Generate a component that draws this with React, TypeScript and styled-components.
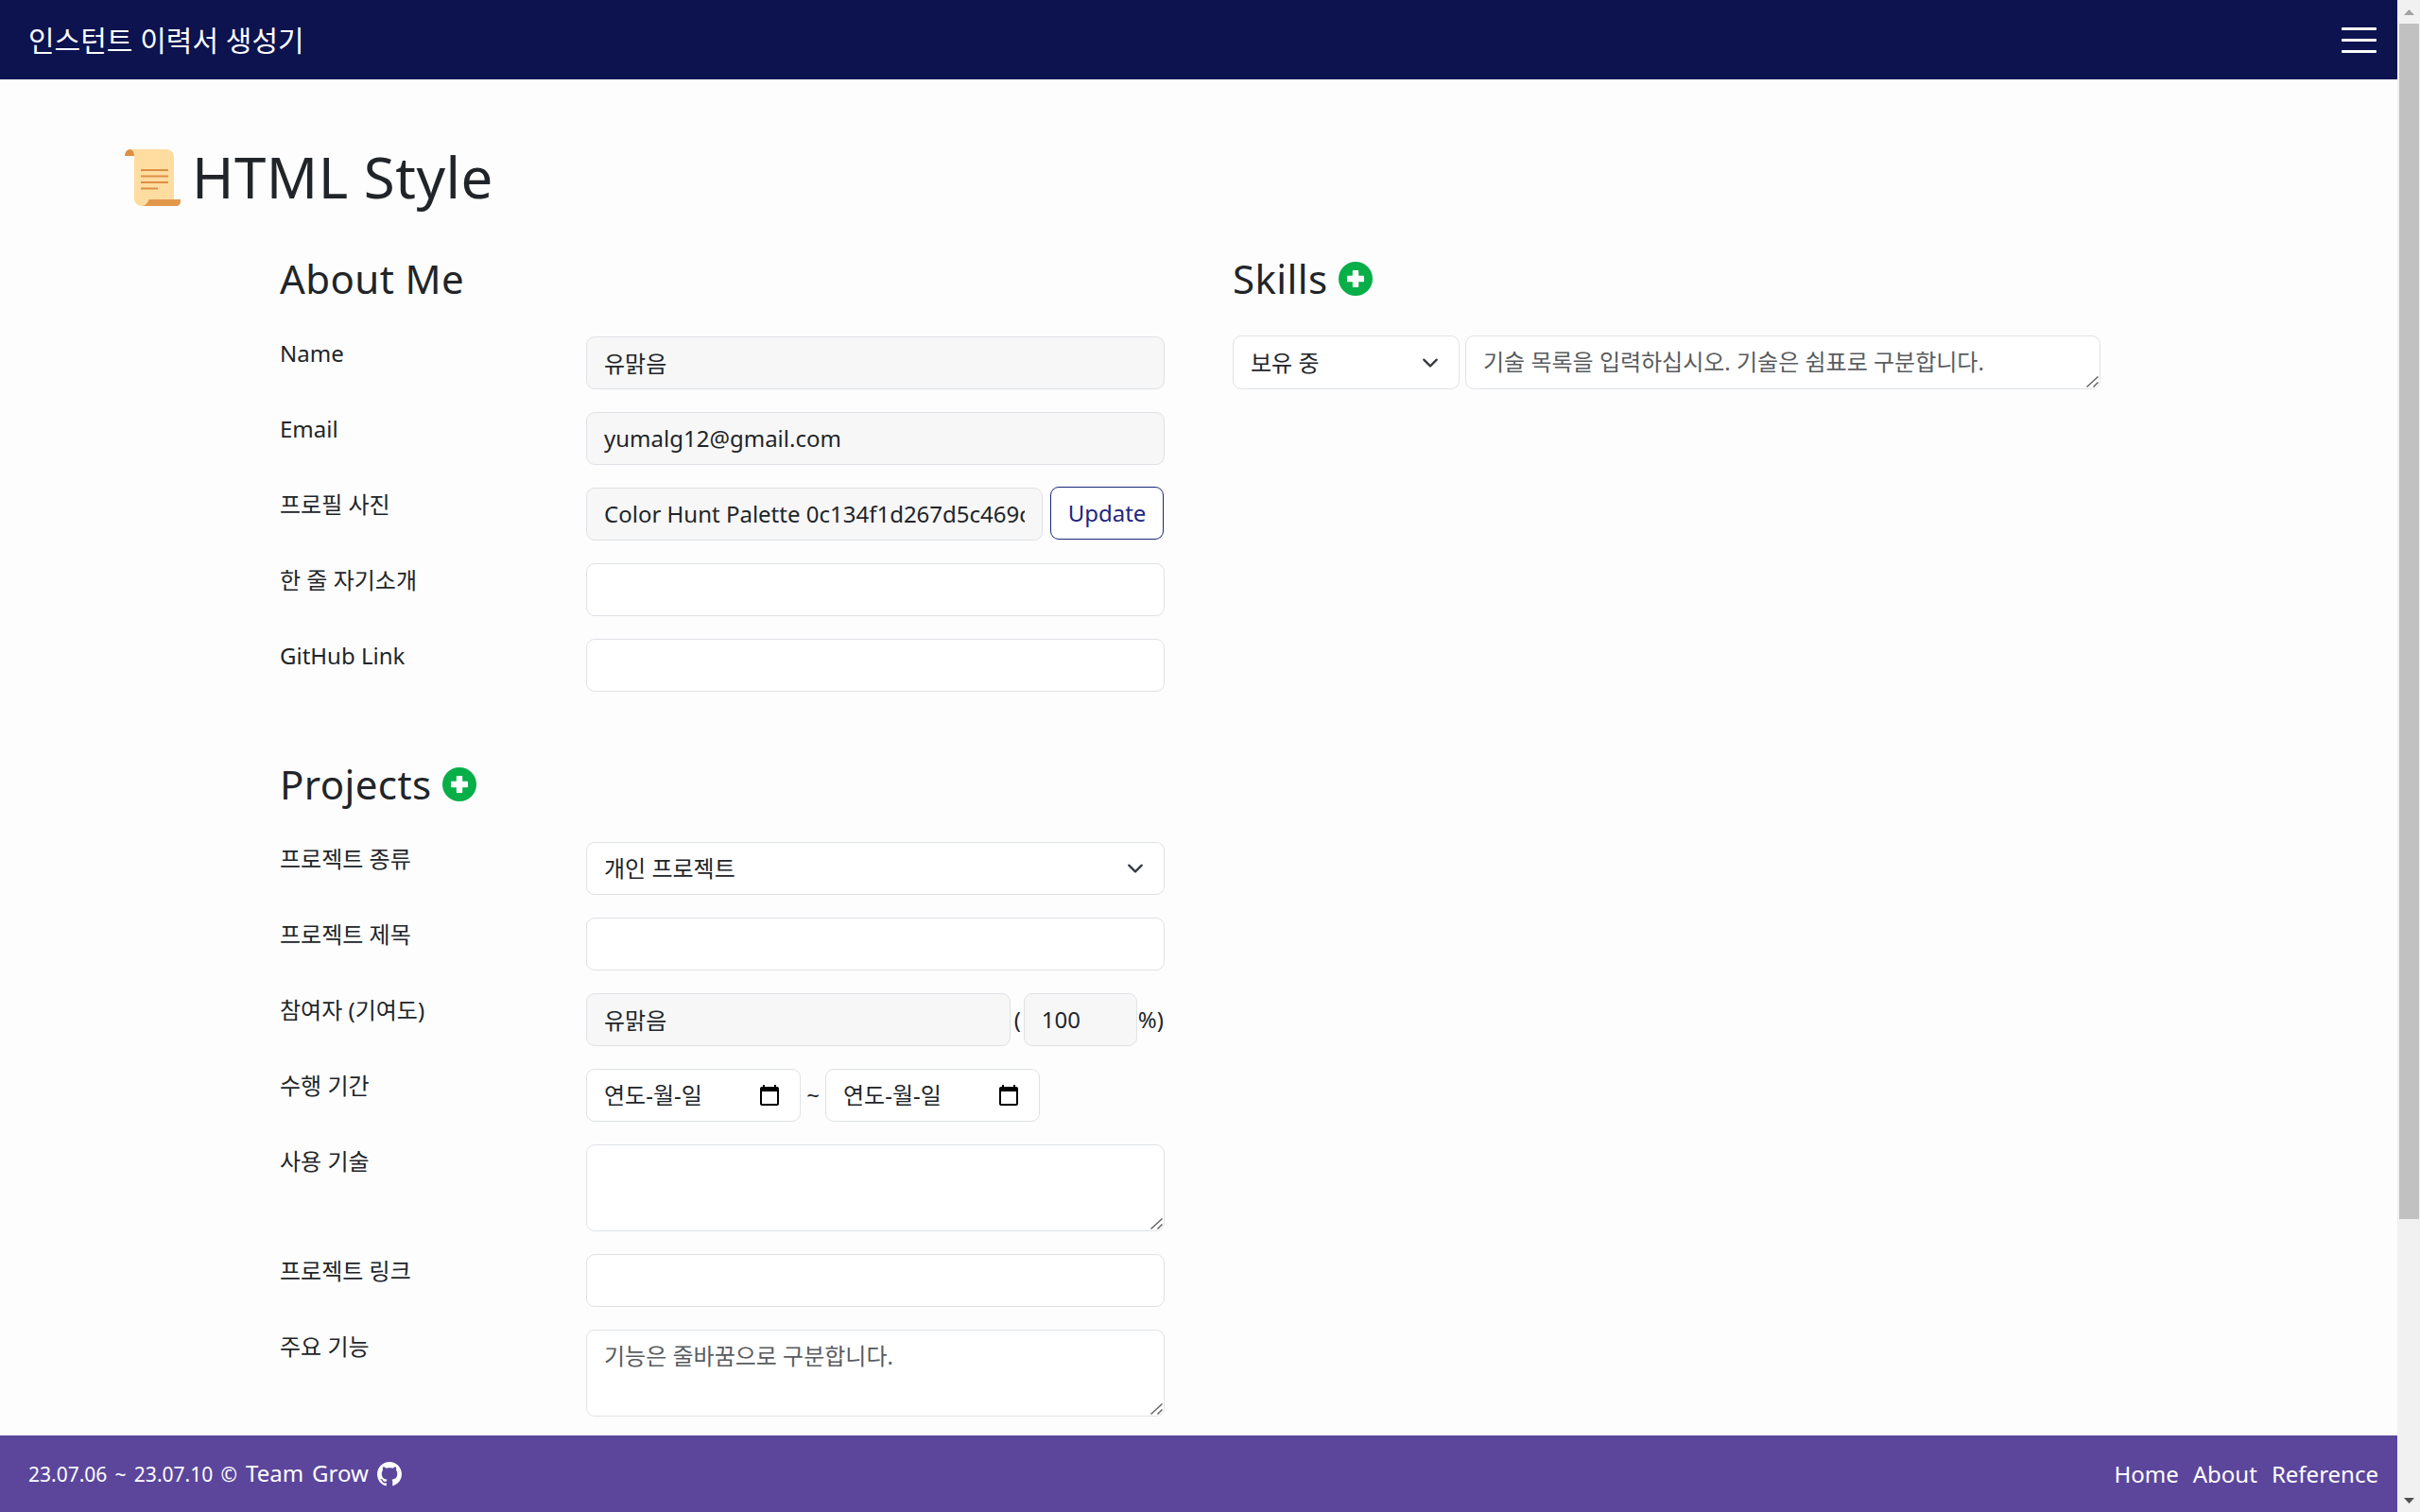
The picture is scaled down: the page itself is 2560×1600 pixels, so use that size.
import React from "react";
import styled, { createGlobalStyle } from "styled-components";
import { BsGithub } from "react-icons/bs";

const selectArrow =
  "url(\"data:image/svg+xml,%3Csvg xmlns='http://www.w3.org/2000/svg' viewBox='0 0 16 16'%3E%3Cpath fill='none' stroke='%23343a40' stroke-linecap='round' stroke-linejoin='round' stroke-width='2' d='m2 5 6 6 6-6'/%3E%3C/svg%3E\")";
const resizeGrip =
  "url(\"data:image/svg+xml,%3Csvg xmlns='http://www.w3.org/2000/svg' width='16' height='16'%3E%3Cpath fill='none' stroke='%23666' stroke-width='1.500' d='M14.500 3.500 2.500 14.500M14.500 9.500 9.500 14.500'/%3E%3C/svg%3E\")";

const GlobalStyle = createGlobalStyle`
  * {
    box-sizing: border-box;
  }

  html {
    overflow: hidden;
  }

  body {
    margin: 0;
    background: #fdfdfd;
    color: #212529;
    font-family: "Noto Sans", "Noto Sans CJK KR", sans-serif;
    font-size: 24px;
    line-height: 36px;
  }
`;

const Shell = styled.div`
  display: flex;
  height: 100vh;
`;

const Page = styled.div`
  flex: 1;
  min-width: 0;
  overflow-y: auto;
  scrollbar-width: none;
`;

const ScrollRail = styled.div`
  flex: 0 0 24px;
  display: flex;
  flex-direction: column;
  justify-content: space-between;
  background: #f1f1f1;
`;

const ScrollThumb = styled.div`
  flex: 0 0 1265px;
  margin: 0 1px 0 2px;
  background: #c1c1c1;
`;

const ScrollSpacer = styled.div`
  flex: 1;
`;

const Navbar = styled.nav`
  position: sticky;
  top: 0;
  z-index: 10;
  display: flex;
  align-items: center;
  justify-content: space-between;
  height: 84px;
  padding: 0 22px 0 30px;
  background: #0c134f;
  color: #fff;
`;

const Brand = styled.a`
  font-size: 30px;
  line-height: 45px;
`;

const Toggler = styled.button`
  display: flex;
  flex-direction: column;
  gap: 9px;
  width: 37px;
  padding: 0;
  border: 0;
  background: none;

  span {
    height: 3px;
    border-radius: 1px;
    background: #fff;
  }
`;

const Main = styled.main`
  min-height: 1795px;
  padding: 67px 0 0 132px;
`;

const PageTitle = styled.h1`
  display: flex;
  align-items: center;
  gap: 11px;
  margin: 0 0 47px;
  font-size: 60px;
  font-weight: 400;
  line-height: 72px;
  letter-spacing: 0.5px;

  svg {
    margin-top: 2px;
  }
`;

const Columns = styled.div`
  display: flex;
  gap: 72px;
  padding-left: 164px;
`;

const LeftColumn = styled.div`
  width: 936px;
`;

const RightColumn = styled.div`
  width: 918px;
`;

const Section = styled.section`
  margin-bottom: 73px;
`;

const SectionTitle = styled.h3`
  display: flex;
  align-items: center;
  gap: 11px;
  margin: 0 0 36px;
  font-size: 42px;
  font-weight: 400;
  line-height: 50px;
  letter-spacing: 0.4px;
`;

const Row = styled.div`
  display: flex;
  margin-bottom: 24px;
`;

const Label = styled.label`
  flex: 0 0 324px;
`;

const Control = styled.div`
  flex: 1;
  display: flex;
  align-items: center;
  min-width: 0;
`;

const Input = styled.input<{ $width?: number }>`
  flex: ${(p) => (p.$width ? `0 0 ${p.$width}px` : "1")};
  min-width: 0;
  height: 56px;
  padding: 8px 18px 10px;
  border: 1px solid #dee2e6;
  border-radius: 9px;
  background: ${(p) => (p.readOnly ? "#f7f7f7" : "#fff")};
  color: #212529;
  font: inherit;
  outline: none;
`;

const TextArea = styled.textarea<{ $height: number }>`
  display: block;
  flex: 1;
  min-width: 0;
  height: ${(p) => p.$height}px;
  padding: 9px 18px;
  border: 1px solid #dee2e6;
  border-radius: 9px;
  background: #fff;
  color: #212529;
  font: inherit;
  outline: none;
  resize: vertical;

  &::placeholder {
    color: #595c5f;
    opacity: 1;
  }

  &::-webkit-resizer {
    background: ${resizeGrip} no-repeat right bottom;
  }
`;

const Select = styled.select<{ $width?: number }>`
  flex: ${(p) => (p.$width ? `0 0 ${p.$width}px` : "1")};
  height: 56px;
  padding: 9px 54px 9px 18px;
  border: 1px solid #dee2e6;
  border-radius: 9px;
  background: #fff ${selectArrow} no-repeat right 18px center / 24px 18px;
  color: #212529;
  font: inherit;
  outline: none;
  appearance: none;
`;

const UpdateButton = styled.button`
  flex: 0 0 120px;
  height: 56px;
  margin: -2px 1px 0 8px;
  padding: 0;
  border: 1px solid #1d267d;
  border-radius: 9px;
  background: #fff;
  color: #1d267d;
  font: inherit;
`;

const Paren = styled.span<{ $left?: number; $right?: number }>`
  margin: 0 ${(p) => p.$right ?? 0}px 0 ${(p) => p.$left ?? 0}px;
`;

const DateField = styled.div`
  flex: 0 0 227px;
  display: flex;
  align-items: center;
  justify-content: space-between;
  height: 56px;
  padding: 0 20px 0 18px;
  border: 1px solid #dee2e6;
  border-radius: 9px;
  background: #fff;
`;

const DateSeparator = styled.span`
  flex: 0 0 26px;
  text-align: center;
`;

const SkillRow = styled.div`
  display: flex;
  gap: 6px;
  margin-top: -1px;

  select {
    height: 57px;
  }
`;

const Footer = styled.footer`
  position: sticky;
  bottom: 0;
  z-index: 10;
  display: flex;
  align-items: center;
  justify-content: space-between;
  height: 81px;
  padding: 0 20px 0 30px;
  background: #5c469c;
  color: #fff;
`;

const Credit = styled.div`
  display: flex;
  align-items: center;
  gap: 9px;
  word-spacing: 2.8px;

  small {
    font-size: 21px;
  }

  svg {
    width: 26px;
    height: 26px;
  }
`;

const FooterLinks = styled.div`
  display: flex;
  gap: 15px;
`;

function AddIcon() {
  return (
    <svg width="36" height="36" viewBox="0 0 36 36">
      <circle cx="18" cy="18" r="18" fill="#08ae48" />
      <path
        fill="#fff"
        d="M15.500 9h5a.7.7 0 0 1 .7.7v5.100h5.100a.7.7 0 0 1 .7.7v5a.7.7 0 0 1-.7.7h-5.100v5.100a.7.7 0 0 1-.7.7h-5a.7.7 0 0 1-.7-.7v-5.100H9.700a.7.7 0 0 1-.7-.7v-5a.7.7 0 0 1 .7-.7h5.100V9.700a.7.7 0 0 1 .7-.7z"
      />
    </svg>
  );
}

function ScrollArrow({ up }: { up?: boolean }) {
  return (
    <svg width="24" height="25" viewBox="0 0 24 25">
      {up ? <path fill="#a3a3a3" d="M7 16h11l-5.500-6z" /> : <path fill="#505050" d="M7 10h11l-5.500 6z" />}
    </svg>
  );
}

function CalendarIcon() {
  return (
    <svg width="24" height="24" viewBox="0 0 24 24" fill="#000">
      <path d="M20 3h-1V1h-2v2H7V1H5v2H4c-1.100 0-2 .9-2 2v16c0 1.100.9 2 2 2h16c1.100 0 2-.9 2-2V5c0-1.100-.9-2-2-2zm0 18H4V8h16v13z" />
    </svg>
  );
}

function ScrollIcon() {
  return (
    <svg width="60" height="60" viewBox="0 0 60 60">
      <path
        fill="#ffdda1"
        d="M4 0H44C48.500 0 52 3.500 52 8V60H18C13.500 60 10 56.500 10 52V7C10 3 8 0 4 0Z"
      />
      <path fill="#dd8f45" d="M0 7C0 3 2.500 0 5.500 0C8 0 10 3 10 7Z" />
      <path fill="#e2984a" d="M18 60C21.500 60 24 57 25.500 53H59V54.500C59 58 57.500 60 54 60Z" />
      <path fill="#dd8f45" d="M17 21h29v2H17zM17 27.500h29v2H17zM17 34h29v2H17zM17 40.500h18v2H17z" />
    </svg>
  );
}

export default function App() {
  return (
    <Shell>
      <GlobalStyle />
      <Page>
        <Navbar>
          <Brand>인스턴트 이력서 생성기</Brand>
          <Toggler aria-label="menu">
            <span />
            <span />
            <span />
          </Toggler>
        </Navbar>

        <Main>
          <PageTitle>
            <ScrollIcon />
            HTML Style
          </PageTitle>

          <Columns>
            <LeftColumn>
              <Section>
                <SectionTitle>About Me</SectionTitle>
                <Row>
                  <Label>Name</Label>
                  <Control>
                    <Input readOnly defaultValue="유맑음" />
                  </Control>
                </Row>
                <Row>
                  <Label>Email</Label>
                  <Control>
                    <Input readOnly defaultValue="yumalg12@gmail.com" />
                  </Control>
                </Row>
                <Row>
                  <Label>프로필 사진</Label>
                  <Control>
                    <Input readOnly defaultValue="Color Hunt Palette 0c134f1d267d5c469cd4adfc.png" />
                    <UpdateButton>Update</UpdateButton>
                  </Control>
                </Row>
                <Row>
                  <Label>한 줄 자기소개</Label>
                  <Control>
                    <Input />
                  </Control>
                </Row>
                <Row>
                  <Label>GitHub Link</Label>
                  <Control>
                    <Input />
                  </Control>
                </Row>
              </Section>

              <Section>
                <SectionTitle>
                  Projects <AddIcon />
                </SectionTitle>
                <Row>
                  <Label>프로젝트 종류</Label>
                  <Control>
                    <Select>
                      <option>개인 프로젝트</option>
                    </Select>
                  </Control>
                </Row>
                <Row>
                  <Label>프로젝트 제목</Label>
                  <Control>
                    <Input />
                  </Control>
                </Row>
                <Row>
                  <Label>참여자 (기여도)</Label>
                  <Control>
                    <Input readOnly defaultValue="유맑음" />
                    <Paren $left={4} $right={3}>(</Paren>
                    <Input readOnly $width={120} defaultValue="100" />
                    <Paren $left={1} $right={1}>%)</Paren>
                  </Control>
                </Row>
                <Row>
                  <Label>수행 기간</Label>
                  <Control>
                    <DateField>
                      연도-월-일 <CalendarIcon />
                    </DateField>
                    <DateSeparator>~</DateSeparator>
                    <DateField>
                      연도-월-일 <CalendarIcon />
                    </DateField>
                  </Control>
                </Row>
                <Row>
                  <Label>사용 기술</Label>
                  <Control>
                    <TextArea $height={92} />
                  </Control>
                </Row>
                <Row>
                  <Label>프로젝트 링크</Label>
                  <Control>
                    <Input />
                  </Control>
                </Row>
                <Row>
                  <Label>주요 기능</Label>
                  <Control>
                    <TextArea $height={92} placeholder="기능은 줄바꿈으로 구분합니다." />
                  </Control>
                </Row>
              </Section>
            </LeftColumn>

            <RightColumn>
              <Section>
                <SectionTitle>
                  Skills <AddIcon />
                </SectionTitle>
                <SkillRow>
                  <Select $width={240}>
                    <option>보유 중</option>
                  </Select>
                  <TextArea $height={57} placeholder="기술 목록을 입력하십시오. 기술은 쉼표로 구분합니다." />
                </SkillRow>
              </Section>
            </RightColumn>
          </Columns>
        </Main>

        <Footer>
          <Credit>
            <span>
              <small>23.07.06 ~ 23.07.10 ©</small> Team Grow
            </span>
            <BsGithub />
          </Credit>
          <FooterLinks>
            <span>Home</span>
            <span>About</span>
            <span>Reference</span>
          </FooterLinks>
        </Footer>
      </Page>

      <ScrollRail>
        <ScrollArrow up />
        <ScrollThumb />
        <ScrollSpacer />
        <ScrollArrow />
      </ScrollRail>
    </Shell>
  );
}
